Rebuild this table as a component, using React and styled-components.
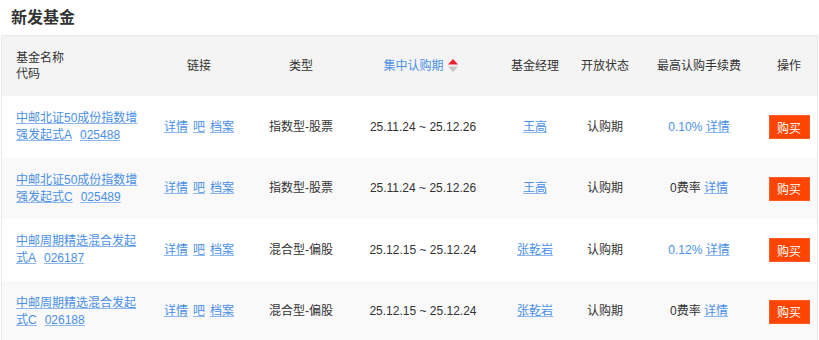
import styled, { createGlobalStyle } from "styled-components";

const GlobalStyle = createGlobalStyle`
  body {
    margin: 0;
    background: #fff;
    font-family: "Liberation Sans", "Noto Sans CJK SC", sans-serif;
    font-size: 12px;
    color: #333;
  }
`

const cols = "149px 96px 108px 136px 88px 52px 136px 1fr";

const Page = styled.div`
  width: 819px;
  height: 340px;
  overflow: hidden;
`

const Title = styled.h2`
  margin: 0;
  padding: 8px 11px;
  font-size: 16px;
  line-height: 19px;
  font-weight: bold;
  color: #333;
`

const Table = styled.div`
  margin: 0 1px;
  border: 1px solid #e8e8e8;
  border-bottom: none;
`

const Row = styled.div`
  display: grid;
  grid-template-columns: ${cols};
  align-items: center;
  height: ${(p) => p.$h}px;
  background: ${(p) => p.$bg};
`

const Cell = styled.div`
  text-align: ${(p) => (p.$left ? "left" : "center")};
  padding-left: ${(p) => (p.$left ? "14px" : "0")};
  padding-right: ${(p) => p.$pr || 0}px;
  line-height: 17px;
  color: ${(p) => (p.$blue ? "#4a8fe7" : "#333")};
  white-space: ${(p) => (p.$left ? "normal" : "nowrap")};
`

const HeadCell = styled(Cell)`
  line-height: 16px;
`

const NameBox = styled.div`
  width: 124px;
`

const A = styled.a`
  color: #4a8fe7;
  text-decoration: underline;
  text-decoration-color: #8db8ee;
  cursor: pointer;
`

const Code = styled(A)`
  margin-left: 8px;
`

const Links = styled.div`
  display: inline-flex;
  gap: 5px;
`

const Rate = styled.span`
  color: ${(p) => (p.$blue ? "#4a8fe7" : "#333")};
`

const Sort = styled.svg`
  vertical-align: -2px;
  margin-left: 4px;
`

const BuyButton = styled.button`
  width: 41px;
  height: 24px;
  padding: 0;
  border: 1px solid #ff5a1f;
  background: #ff4400;
  color: #fff;
  font-family: inherit;
  font-size: 12px;
  cursor: pointer;
`

const funds = [
  { name: "中邮北证50成份指数增强发起式A", code: "025488", type: "指数型-股票", period: "25.11.24 ~ 25.12.26", manager: "王高", fee: "0.10%" },
  { name: "中邮北证50成份指数增强发起式C", code: "025489", type: "指数型-股票", period: "25.11.24 ~ 25.12.26", manager: "王高", fee: "0费率" },
  { name: "中邮周期精选混合发起式A", code: "026187", type: "混合型-偏股", period: "25.12.15 ~ 25.12.24", manager: "张乾岩", fee: "0.12%" },
  { name: "中邮周期精选混合发起式C", code: "026188", type: "混合型-偏股", period: "25.12.15 ~ 25.12.24", manager: "张乾岩", fee: "0费率" },
];

const App = () => {
  return (
    <Page>
      <GlobalStyle />
      <Title>新发基金</Title>
      <Table>
        <Row $h={60} $bg="#f4f4f4">
          <HeadCell $left>基金名称<br />代码</HeadCell>
          <HeadCell>链接</HeadCell>
          <HeadCell>类型</HeadCell>
          <HeadCell $blue $pr={5}>
            集中认购期
            <Sort width="10" height="13" viewBox="0 0 10 13">
              <polygon points="5,0 10,5.5 0,5.5" fill="#e8202a" />
              <polygon points="0,7.5 10,7.5 5,13" fill="#c8c8c8" />
            </Sort>
          </HeadCell>
          <HeadCell>基金经理</HeadCell>
          <HeadCell>开放状态</HeadCell>
          <HeadCell>最高认购手续费</HeadCell>
          <HeadCell $pr={6}>操作</HeadCell>
        </Row>
        {funds.map((f, i) => (
          <Row key={f.code} $h={i % 2 ? 61 : 62} $bg={i % 2 ? "#f9f9f9" : "#fff"}>
            <Cell $left>
              <NameBox>
                <A>{f.name}</A><Code>{f.code}</Code>
              </NameBox>
            </Cell>
            <Cell>
              <Links>
                <A>详情</A><A>吧</A><A>档案</A>
              </Links>
            </Cell>
            <Cell>{f.type}</Cell>
            <Cell>{f.period}</Cell>
            <Cell><A>{f.manager}</A></Cell>
            <Cell>认购期</Cell>
            <Cell>
              <Rate $blue={f.fee.includes("%")}>{f.fee}</Rate> <A>详情</A>
            </Cell>
            <Cell $pr={6}><BuyButton>购买</BuyButton></Cell>
          </Row>
        ))}
      </Table>
    </Page>
  );
}

export default App;
